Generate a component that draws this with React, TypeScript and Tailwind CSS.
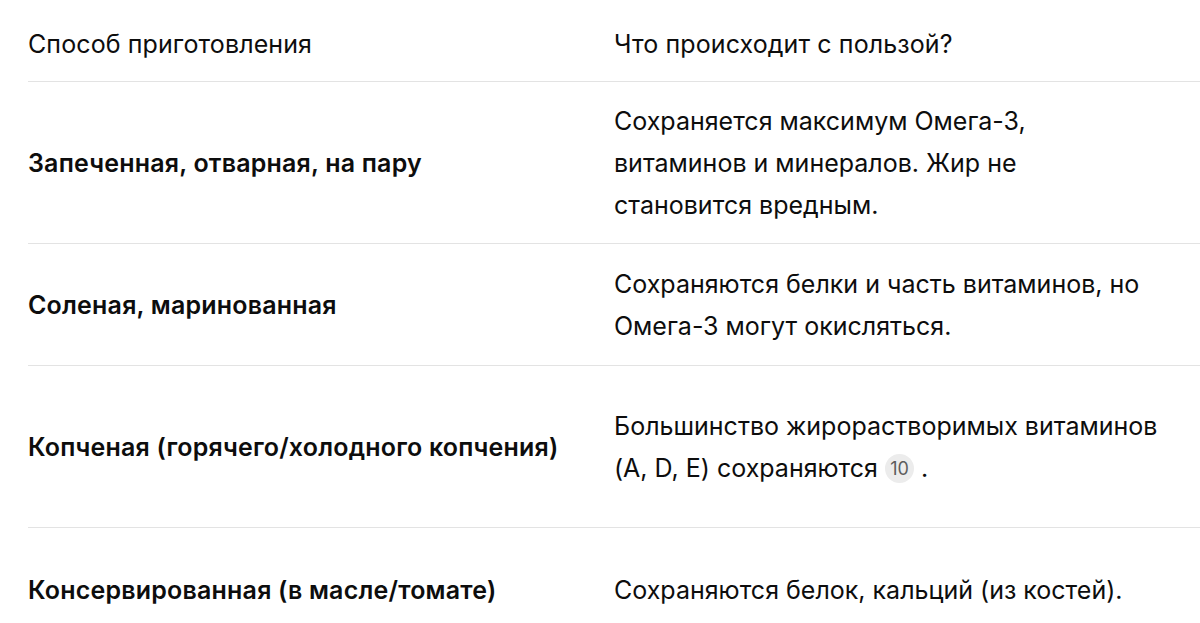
import React from "react";

const rows: { a: string; b: React.ReactNode; h: string }[] = [
  {
    a: "Запеченная, отварная, на пару",
    b: (
      <>
        Сохраняется максимум Омега-3,
        <br />
        витаминов и минералов. Жир не
        <br />
        становится вредным.
      </>
    ),
    h: "h-[162px]",
  },
  {
    a: "Соленая, маринованная",
    b: (
      <>
        Сохраняются белки и часть витаминов, но
        <br />
        Омега-3 могут окисляться.
      </>
    ),
    h: "h-[122px]",
  },
  {
    a: "Копченая (горячего/холодного копчения)",
    b: (
      <>
        Большинство жирорастворимых витаминов
        <br />
        (A, D, E) сохраняются{" "}
        <span
          className="inline-flex items-center justify-center h-[29px] min-w-[29px] px-[5px] rounded-full bg-[#ececec] text-[#5d5d5d] align-[2px]"
          style={{ fontSize: 18, lineHeight: "18px" }}
        >
          10
        </span>{" "}
        .
      </>
    ),
    h: "h-[162px]",
  },
  {
    a: "Консервированная (в масле/томате)",
    b: <>Сохраняются белок, кальций (из костей).</>,
    h: "h-[124px]",
  },
];

export default function App() {
  return (
    <div className="w-[1200px] h-[623px] overflow-hidden bg-white text-[#0d0d0d] font-['Inter',sans-serif] text-[25px] leading-[42px]">
      <div className="pl-[28px]">
        <div className="flex h-[82px] items-center border-b border-[#e3e3e3] pt-[7px] tracking-[0.1px]">
          <div className="w-[586px]">Способ приготовления</div>
          <div>Что происходит с пользой?</div>
        </div>
        {rows.map((r, i) => (
          <div
            key={i}
            className={`flex items-center ${r.h} ${i < rows.length - 1 ? "border-b border-[#e3e3e3]" : ""}`}
          >
            <div className="w-[586px] font-semibold tracking-[0.2px]">{r.a}</div>
            <div>{r.b}</div>
          </div>
        ))}
      </div>
    </div>
  );
}
